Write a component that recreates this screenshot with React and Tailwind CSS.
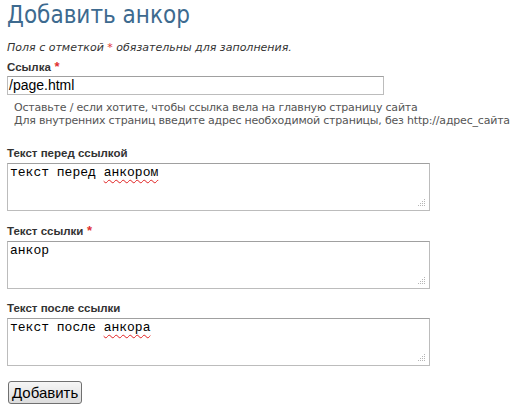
import React from 'react';

// Уголок для изменения размера поля
function Grip() {
    return (
        <svg className="absolute right-[3px] bottom-[3px]" width="8" height="8" viewBox="0 0 8 8">
            <rect x="6" y="0" width="1" height="1" fill="#b5b5b5" />
            <rect x="4" y="2" width="1" height="1" fill="#b5b5b5" />
            <rect x="6" y="2" width="1" height="1" fill="#b5b5b5" />
            <rect x="2" y="4" width="1" height="1" fill="#b5b5b5" />
            <rect x="4" y="4" width="1" height="1" fill="#b5b5b5" />
            <rect x="6" y="4" width="1" height="1" fill="#b5b5b5" />
            <rect x="0" y="6" width="1" height="1" fill="#b5b5b5" />
            <rect x="2" y="6" width="1" height="1" fill="#b5b5b5" />
            <rect x="4" y="6" width="1" height="1" fill="#b5b5b5" />
            <rect x="6" y="6" width="1" height="1" fill="#b5b5b5" />
        </svg>
    );
}

function Label({ children, required }) {
    return (
        <div className="font-['Liberation_Sans',Arial,sans-serif] text-[11.5px] font-bold text-[#333] leading-[13px]">
            {children}
            {required && <span className="text-[#e03030] text-[13px]"> *</span>}
        </div>
    );
}

function Area({ children }) {
    return (
        <div className="relative w-[423px] h-[48px] border border-[#bcbcbc] border-t-[#a0a0a0] bg-white px-[2px] py-[1px] font-['Liberation_Mono',monospace] text-[13px] leading-[16px] text-black">
            {children}
            <Grip />
        </div>
    );
}

function Wavy({ children }) {
    return (
        <span className="underline decoration-wavy decoration-[#e02020] decoration-1 underline-offset-[3px]">{children}</span>
    );
}

export default function App() {
    return (
        <div className="w-[516px] h-[406px] bg-white px-[7px] font-['DejaVu_Sans',Verdana,sans-serif] overflow-hidden">
            <h1 className="font-['DejaVu_Sans_Condensed','DejaVu_Sans',sans-serif] text-[24px] leading-[28px] text-[#3d6a8f] pt-[1px]">Добавить анкор</h1>

            <p className="mt-[12px] text-[11px] italic text-[#333] leading-[13px]">
                Поля с отметкой <span className="text-[#e03030] not-italic">*</span> обязательны для заполнения.
            </p>

            <div className="mt-[6px]">
                <Label required>Ссылка</Label>
                <div className="mt-[2px] w-[377px] h-[19px] border border-[#bcbcbc] border-t-[#a0a0a0] px-[1px] font-['Liberation_Sans',Arial,sans-serif] text-[14px] leading-[17px] text-black">
                    /page.html
                </div>
                <div className="mt-[6px] pl-[7px] text-[11px] leading-[13px] tracking-[-0.2px] text-[#555] whitespace-nowrap">
                    <div>Оставьте / если хотите, чтобы ссылка вела на главную страницу сайта</div>
                    <div>Для внутренних страниц введите адрес необходимой страницы, без http://адрес_сайта</div>
                </div>
            </div>

            <div className="mt-[20px]">
                <Label>Текст перед ссылкой</Label>
                <div className="mt-[3px]">
                    <Area>текст перед <Wavy>анкором</Wavy></Area>
                </div>
            </div>

            <div className="mt-[13px]">
                <Label required>Текст ссылки</Label>
                <div className="mt-[3px]">
                    <Area>анкор</Area>
                </div>
            </div>

            <div className="mt-[13px]">
                <Label>Текст после ссылки</Label>
                <div className="mt-[3px]">
                    <Area>текст после <Wavy>анкора</Wavy></Area>
                </div>
            </div>

            <button className="mt-[15px] ml-[1px] h-[23px] px-[3px] rounded-[3px] border border-[#707070] bg-gradient-to-b from-[#f6f6f6] to-[#dcdcdc] font-['Liberation_Sans',Arial,sans-serif] text-[15px] leading-[20px] text-black">
                Добавить
            </button>
        </div>
    );
}
